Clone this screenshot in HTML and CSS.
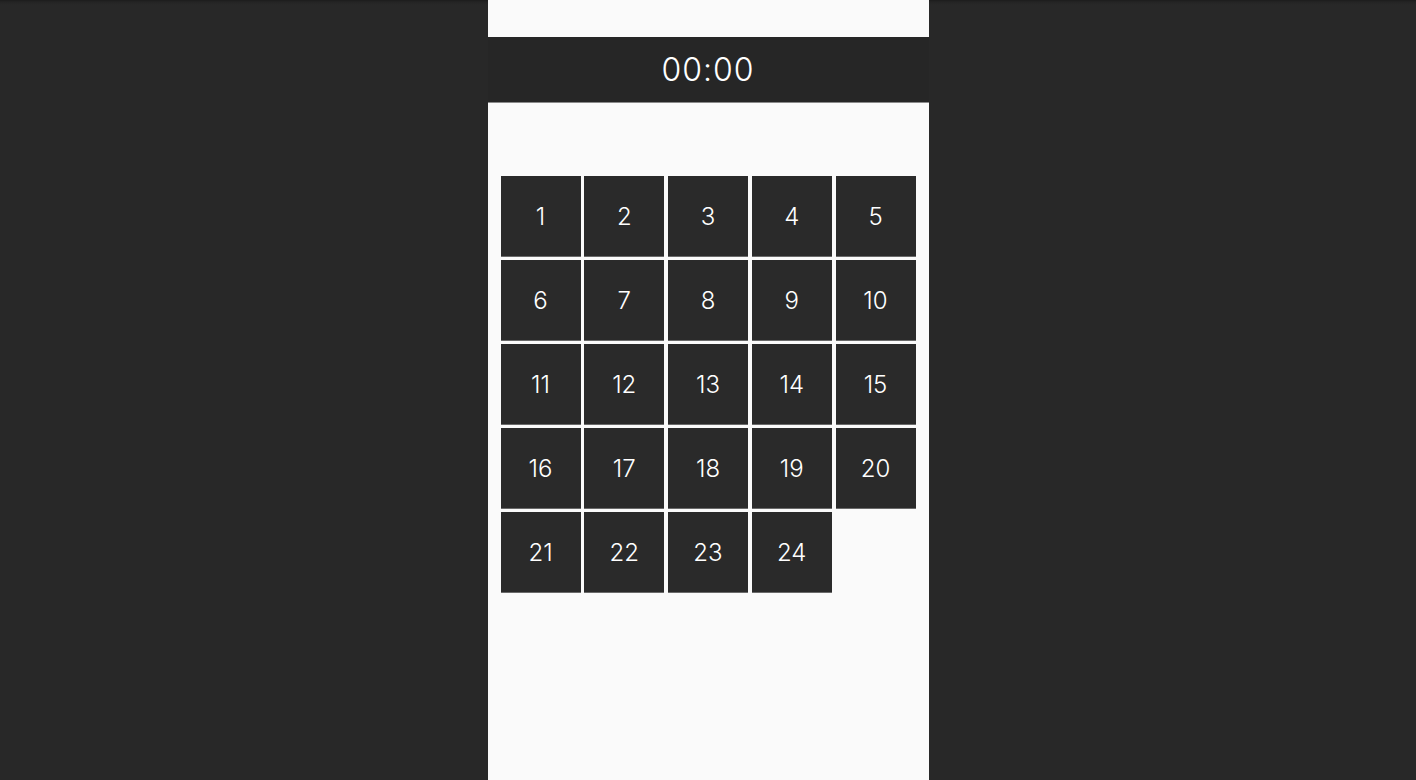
FILE: index.html
```html
<!DOCTYPE html>
<html lang="en">
<head>
<meta charset="utf-8">
<title>Puzzle</title>
<link rel="stylesheet" href="styles.css">
</head>
<body>
<div class="page">
  <main class="app">
    <div class="topbar"></div>
    <header class="timer">00:00</header>
    <section class="board">
      <div class="tile">1</div><div class="tile">2</div><div class="tile">3</div><div class="tile">4</div><div class="tile">5</div>
      <div class="tile">6</div><div class="tile">7</div><div class="tile">8</div><div class="tile">9</div><div class="tile">10</div>
      <div class="tile">11</div><div class="tile">12</div><div class="tile">13</div><div class="tile">14</div><div class="tile">15</div>
      <div class="tile">16</div><div class="tile">17</div><div class="tile">18</div><div class="tile">19</div><div class="tile">20</div>
      <div class="tile">21</div><div class="tile">22</div><div class="tile">23</div><div class="tile">24</div>
    </section>
  </main>
</div>
</body>
</html>
```
FILE: styles.css
```css
html, body {
  margin: 0;
  padding: 0;
  height: 100%;
}
body {
  background: linear-gradient(to bottom, #1c1c1c 0px, #242424 2px, #282828 5px, #282828 100%);
  font-family: "Inter", "Noto Sans", sans-serif;
  overflow: hidden;
}
.page {
  display: flex;
  justify-content: center;
  height: 100%;
}
.app {
  width: 441px;
  background: #fafafa;
  display: flex;
  flex-direction: column;
  height: 100%;
}
.topbar {
  height: 37px;
}
.timer {
  background: #262626;
  border-bottom: 1px solid #8a8a8a;
  box-sizing: border-box;
  height: 66px;
  padding-bottom: 1px;
  color: #ffffff;
  font-size: 32px;
  font-weight: 300;
  letter-spacing: 1px;
  display: flex;
  align-items: center;
  justify-content: center;
}
.board {
  margin-top: 73px;
  padding: 0 13px;
  display: grid;
  grid-template-columns: repeat(5, 1fr);
  grid-auto-rows: 80px;
  column-gap: 3.75px;
  row-gap: 4px;
}
.tile {
  background: #2a2a2a;
  color: #ffffff;
  font-size: 24px;
  font-weight: 300;
  display: flex;
  align-items: center;
  justify-content: center;
  box-shadow: 0 1px 0 #6a6a6a;
}
```
